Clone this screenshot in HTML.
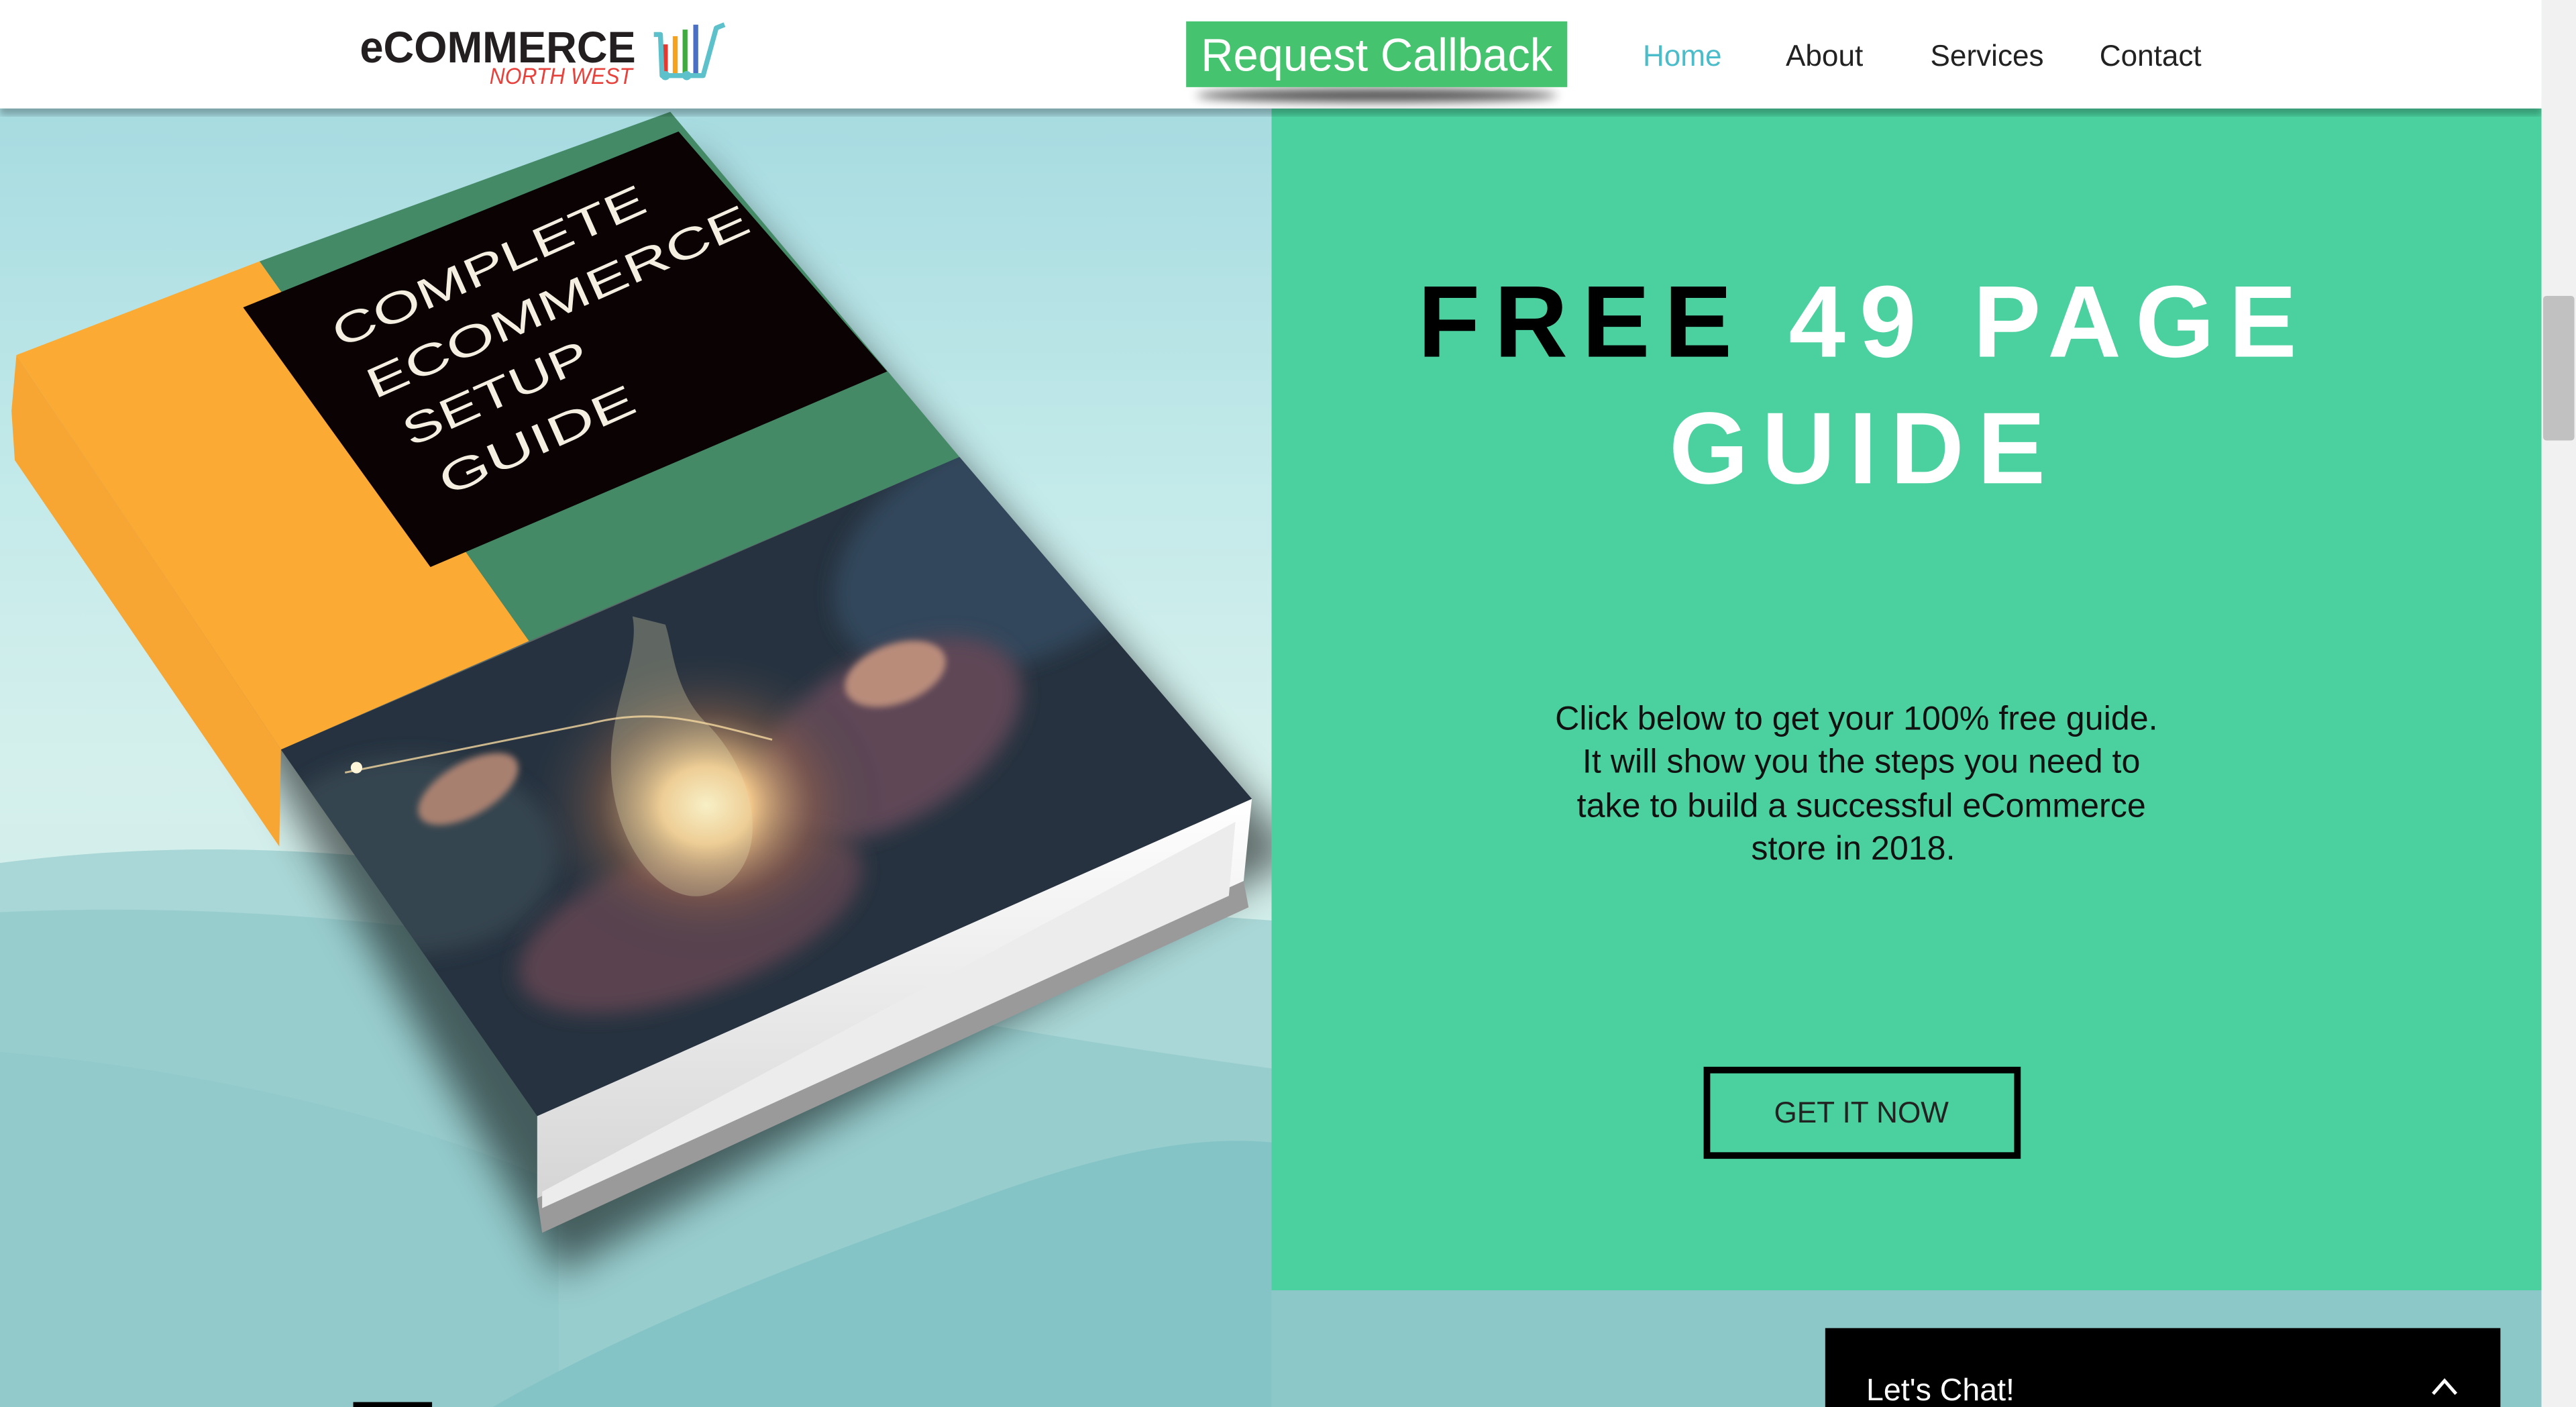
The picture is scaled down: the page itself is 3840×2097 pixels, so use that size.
<!DOCTYPE html>
<html><head><meta charset="utf-8"><style>
html,body{margin:0;padding:0;width:3840px;height:2097px;overflow:hidden;background:#fff}
svg{display:block}
</style></head><body>
<svg width="3840" height="2097" viewBox="0 0 1568 856" preserveAspectRatio="none" xmlns="http://www.w3.org/2000/svg">
<defs>
<linearGradient id="sky" x1="0" y1="0" x2="0" y2="1">
<stop offset="0" stop-color="#9ed7de"/><stop offset="0.35" stop-color="#c4eaea"/><stop offset="0.55" stop-color="#d5f0ec"/><stop offset="1" stop-color="#c8e6e4"/>
</linearGradient>
<radialGradient id="glow" cx="0.5" cy="0.5" r="0.5">
<stop offset="0" stop-color="#fff6d0"/><stop offset="0.25" stop-color="#f0c58a"/><stop offset="0.6" stop-color="#8a604a" stop-opacity="0.5"/><stop offset="1" stop-color="#2c3a4a" stop-opacity="0"/>
</radialGradient>
<linearGradient id="pages" x1="0" y1="0" x2="0" y2="1">
<stop offset="0" stop-color="#ffffff"/><stop offset="1" stop-color="#d5d5d5"/>
</linearGradient>
<filter id="blur" x="-20%" y="-20%" width="140%" height="140%"><feGaussianBlur stdDeviation="12"/></filter>
<filter id="blur2" x="-20%" y="-50%" width="140%" height="200%"><feGaussianBlur stdDeviation="3"/></filter>
<filter id="blur3"><feGaussianBlur stdDeviation="2"/></filter>
<filter id="blur4"><feGaussianBlur stdDeviation="6"/></filter>
</defs>

<!-- background sky -->
<rect x="0" y="0" width="1547" height="856" fill="url(#sky)"/>
<!-- mountains -->
<path d="M0 525 C100 512 200 515 300 530 C400 545 500 540 774 560 L774 856 L0 856 Z" fill="#a9d6d6"/>
<path d="M0 555 C150 548 300 565 450 595 C600 625 700 640 774 650 L774 856 L0 856 Z" fill="#98cdce"/>
<path d="M0 640 C120 650 250 680 340 720 L340 856 L0 856 Z" fill="#92c9ca"/>
<path d="M300 856 C380 810 480 770 580 735 C660 705 720 690 774 695 L774 856 Z" fill="#84c4c7"/>
<rect x="774" y="780" width="773" height="76" fill="#8dc8c9"/>

<!-- book shadow -->
<polygon points="40,250 420,95 790,520 340,775" fill="#000" opacity="0.55" filter="url(#blur)"/>
<!-- spine thickness -->
<polygon points="10,216 7,250 9,280 170,515 171,456" fill="#f7a533"/>
<!-- pages -->
<polygon points="762,486 757,536 327,729 327,679" fill="url(#pages)"/>
<polygon points="757,536 760,552 330,750 327,729" fill="#9a9a9a"/>
<polygon points="752,500 748,545 330,735 330,725" fill="#ececec"/>
<!-- photo region -->
<polygon points="171,456 584,278 762,486 327,679" fill="#26323f"/>
<clipPath id="photoClip"><polygon points="171,456 584,278 762,486 327,679"/></clipPath>
<g clip-path="url(#photoClip)">
<ellipse cx="620" cy="330" rx="120" ry="70" fill="#33475c" transform="rotate(-25 620 330)" filter="url(#blur4)"/>
<ellipse cx="250" cy="520" rx="90" ry="60" fill="#34444f" filter="url(#blur4)"/>
<ellipse cx="540" cy="450" rx="90" ry="50" fill="#5e4656" transform="rotate(-30 540 450)" filter="url(#blur4)"/>
<ellipse cx="420" cy="560" rx="110" ry="45" fill="#5a4250" transform="rotate(-20 420 560)" filter="url(#blur4)"/>
<ellipse cx="545" cy="410" rx="32" ry="18" fill="#b98c7a" transform="rotate(-20 545 410)" filter="url(#blur3)"/>
<ellipse cx="285" cy="480" rx="34" ry="16" fill="#a88070" transform="rotate(-30 285 480)" filter="url(#blur3)"/>
<ellipse cx="430" cy="490" rx="110" ry="95" fill="url(#glow)"/>
<path d="M385 375 C390 400 370 430 372 470 C375 520 410 560 440 540 C470 520 460 470 430 440 C410 420 410 395 405 380 Z" fill="#e8e0b0" opacity="0.3"/>
<path d="M210 470 C260 460 310 450 360 440 C400 430 430 440 470 450" stroke="#f5d8a0" stroke-width="1.2" fill="none" opacity="0.8"/>
<circle cx="217" cy="467" r="3.5" fill="#fff5d8"/>
</g>
<!-- orange -->
<polygon points="10,216 158,159 322,390 171,456" fill="#fbaa34"/>
<!-- green -->
<polygon points="158,159 408,68 584,278 322,390" fill="#448a66"/>
<!-- black label -->
<polygon points="148,187 413,80 540,226 262,345" fill="#0b0204"/>
<!-- label text -->
<g font-family="Liberation Sans, sans-serif" font-size="26" fill="#f4efe0">
<text transform="translate(207,212) rotate(-24)" textLength="206" lengthAdjust="spacingAndGlyphs">COMPLETE</text>
<text transform="translate(228,243) rotate(-24)" textLength="252" lengthAdjust="spacingAndGlyphs">ECOMMERCE</text>
<text transform="translate(250,272) rotate(-24)" textLength="121" lengthAdjust="spacingAndGlyphs">SETUP</text>
<text transform="translate(272,302) rotate(-24)" textLength="128" lengthAdjust="spacingAndGlyphs">GUIDE</text>
</g>

<!-- green panel -->
<rect x="774" y="66" width="773" height="719" fill="#4bd19f"/>
<g font-family="Liberation Sans, sans-serif" font-weight="bold" font-size="62">
<text x="863" y="217" textLength="535" lengthAdjust="spacing"><tspan fill="#000">FREE </tspan><tspan fill="#fff">49 PAGE</tspan></text>
<text x="1016" y="294" textLength="229" lengthAdjust="spacing" fill="#fff">GUIDE</text>
</g>
<g font-family="Liberation Sans, sans-serif" font-size="20.5" fill="#111" text-anchor="middle">
<text x="1130" y="444">Click below to get your 100% free guide.</text>
<text x="1133" y="470">It will show you the steps you need to</text>
<text x="1133" y="497">take to build a successful eCommerce</text>
<text x="1128" y="523">store in 2018.</text>
</g>
<rect x="1039" y="651" width="189" height="52" fill="none" stroke="#000" stroke-width="4"/>
<text x="1133" y="683" font-family="Liberation Sans, sans-serif" font-size="18" fill="#222" text-anchor="middle">GET IT NOW</text>

<!-- header -->
<rect x="0" y="60" width="1547" height="10" fill="#000" opacity="0.25" filter="url(#blur3)"/>
<rect x="0" y="0" width="1547" height="66" fill="#fff"/>
<text x="219" y="38" font-family="Liberation Sans, sans-serif" font-size="27" font-weight="bold" fill="#231f20" textLength="168" lengthAdjust="spacingAndGlyphs">eCOMMERCE</text>
<text x="298" y="51" font-family="Liberation Sans, sans-serif" font-style="italic" font-size="14" fill="#e8403a" textLength="87" lengthAdjust="spacingAndGlyphs">NORTH WEST</text>
<!-- cart -->
<g>
<rect x="403.5" y="27" width="3" height="19" fill="#e6382f"/>
<rect x="409.5" y="22" width="3" height="24" fill="#f6a21c"/>
<rect x="415.5" y="18" width="3" height="28" fill="#3fab3f"/>
<rect x="422" y="15" width="3" height="31" fill="#4a6fc4"/>
<path d="M398 21 L402 21 L403 46 L428 46 L436 17 L441 15" stroke="#5cc1cb" stroke-width="3" fill="none" stroke-linejoin="round"/>
<circle cx="405" cy="46" r="2.8" fill="#5cc1cb"/>
<circle cx="418" cy="46" r="2.8" fill="#5cc1cb"/>
</g>
<!-- callback -->
<ellipse cx="838" cy="58" rx="110" ry="4" fill="#000" opacity="0.7" filter="url(#blur2)"/>
<rect x="722" y="13" width="232" height="40" fill="#45c36e"/>
<text x="838" y="43" font-family="Liberation Sans, sans-serif" font-size="28" fill="#fff" text-anchor="middle" textLength="214" lengthAdjust="spacingAndGlyphs">Request Callback</text>
<!-- nav -->
<g font-family="Liberation Sans, sans-serif" font-size="18">
<text x="1000" y="40" fill="#4bbcc9">Home</text>
<text x="1087" y="40" fill="#222">About</text>
<text x="1175" y="40" fill="#222">Services</text>
<text x="1278" y="40" fill="#222">Contact</text>
</g>

<!-- chat -->
<rect x="1111" y="808" width="411" height="48" fill="#000"/>
<text x="1136" y="852" font-family="Liberation Sans, sans-serif" font-size="19" fill="#fff">Let's Chat!</text>
<path d="M1481 848 L1488 840 L1495 848" stroke="#fff" stroke-width="2" fill="none"/>
<rect x="215" y="853" width="48" height="3" fill="#000"/>

<!-- scrollbar -->
<rect x="1547" y="0" width="21" height="856" fill="#f1f1f1"/>
<rect x="1548" y="180" width="19" height="88" rx="2" fill="#c1c1c1"/>
</svg>
</body></html>
